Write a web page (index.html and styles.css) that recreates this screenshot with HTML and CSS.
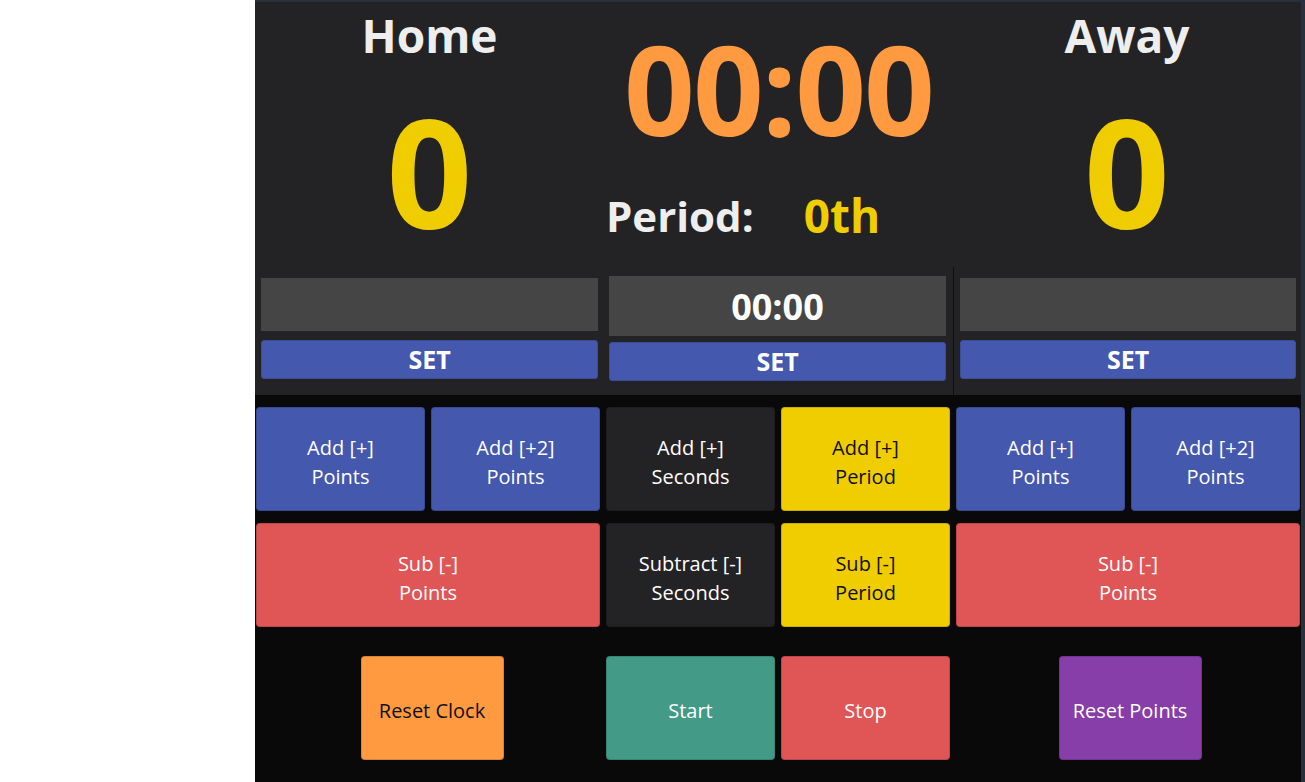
FILE: index.html
```html
<!DOCTYPE html>
<html lang="en">
<head>
    <meta charset="UTF-8">
    <meta name="viewport" content="width=device-width, initial-scale=1.0">
    <title>Scoreboard</title>
    <link rel="stylesheet" href="styles.css">
</head>
<body>
    <div class="board">
        <div class="top">
            <div class="col">
                <div class="display">
                    <h1 class="team-name">Home</h1>
                    <div class="score">0</div>
                </div>
                <div class="controls">
                    <input type="text" class="set-input" id="homeInput">
                    <button class="set-btn">SET</button>
                </div>
            </div>

            <div class="col">
                <div class="display">
                    <div class="clock">00:00</div>
                    <div class="period">
                        <span class="period-label">Period:</span>
                        <span class="period-value">0th</span>
                    </div>
                </div>
                <div class="controls center">
                    <input type="text" class="set-input time-input" id="timeInput" value="00:00">
                    <button class="set-btn">SET</button>
                </div>
            </div>

            <div class="col">
                <div class="display">
                    <h1 class="team-name">Away</h1>
                    <div class="score">0</div>
                </div>
                <div class="controls divider">
                    <input type="text" class="set-input" id="awayInput">
                    <button class="set-btn">SET</button>
                </div>
            </div>
        </div>

        <div class="buttons">
            <button class="btn blue">Add [+]<br>Points</button>
            <button class="btn blue">Add [+2]<br>Points</button>
            <button class="btn dark">Add [+]<br>Seconds</button>
            <button class="btn yellow">Add [+]<br>Period</button>
            <button class="btn blue">Add [+]<br>Points</button>
            <button class="btn blue">Add [+2]<br>Points</button>

            <button class="btn red wide">Sub [-]<br>Points</button>
            <button class="btn dark">Subtract [-]<br>Seconds</button>
            <button class="btn yellow">Sub [-]<br>Period</button>
            <button class="btn red wide">Sub [-]<br>Points</button>

            <button class="btn orange wide-small last-row reset-clock">Reset Clock</button>
            <button class="btn teal last-row">Start</button>
            <button class="btn red last-row">Stop</button>
            <button class="btn purple wide-small last-row reset-points">Reset Points</button>
        </div>
    </div>
</body>
</html>
```

FILE: styles.css
```css
body {
    margin: 0;
    background-color: #ffffff;
    font-family: "Open Sans", "Noto Sans", sans-serif;
}

.board {
    margin-left: 255px;
    width: 1050px;
    height: 782px;
    box-sizing: border-box;
    border-top: 2px solid #28313b;
    border-right: 4px solid #28313b;
    background-color: #090909;
    overflow: hidden;
}

.top {
    display: grid;
    grid-template-columns: 349px 349px 348px;
    background-color: #232325;
    height: 393px;
}

.col {
    display: flex;
    flex-direction: column;
}

.display {
    height: 265px;
    display: flex;
    flex-direction: column;
    align-items: center;
}

.team-name {
    margin: 2px 0 0 0;
    font-size: 46px;
    font-weight: 700;
    color: #eeeeee;
    line-height: normal;
}

.score {
    margin-top: 3px;
    font-size: 150px;
    font-weight: 700;
    color: #f0cd00;
    line-height: normal;
}

.clock {
    margin-top: 1px;
    font-size: 124px;
    font-weight: 700;
    color: #ff9a41;
    line-height: normal;
    letter-spacing: -2px;
}

.period {
    align-self: flex-start;
    margin: 15px 0 0 2px;
    display: flex;
    gap: 50px;
    font-size: 42px;
    font-weight: 700;
    line-height: normal;
}

.period-label {
    color: #eeeeee;
}

.period-value {
    color: #f0cd00;
    font-size: 46px;
    margin-top: -3px;
}

.controls {
    flex: 1;
    display: flex;
    flex-direction: column;
    padding: 11px 6px 0 6px;
}

.controls.center {
    padding: 9px 7px 0 5px;
}

.controls.divider {
    border-left: 1px solid #0e0e0e;
    padding: 11px 5px 0 6px;
}

.set-input {
    height: 53px;
    border: none;
    background-color: #454545;
    color: #ffffff;
    font-family: inherit;
    font-size: 36px;
    font-weight: 700;
    text-align: center;
    padding: 0;
    margin: 0 0 9px 0;
}

.time-input {
    height: 60px;
    margin-bottom: 6px;
}

.set-btn {
    height: 39px;
    border: 1px solid #3a4c9a;
    border-radius: 3px;
    background-color: #4458ad;
    color: #ffffff;
    font-family: inherit;
    font-size: 25px;
    font-weight: 700;
    line-height: 1;
    padding: 0;
    cursor: pointer;
}

.buttons {
    display: grid;
    grid-template-columns: repeat(6, 1fr);
    grid-template-rows: 104px 104px 121px;
    column-gap: 6px;
    row-gap: 12px;
    padding: 12px 1px 0 1px;
}

.btn {
    border: 1px solid rgba(0, 0, 0, 0.15);
    border-radius: 4px;
    font-family: inherit;
    font-size: 20px;
    line-height: 29px;
    padding: 5px 0 0 0;
    color: #ffffff;
    cursor: pointer;
}

.wide {
    grid-column: span 2;
}

.wide-small {
    grid-column: span 2;
    justify-self: center;
    width: 143px;
}

.reset-clock {
    margin-left: 8px;
}

.reset-points {
    margin-left: 4px;
}

.last-row {
    margin-top: 17px;
}

.blue {
    background-color: #4458ad;
}

.dark {
    background-color: #232325;
}

.yellow {
    background-color: #f0cd00;
    color: #111111;
}

.red {
    background-color: #e05555;
}

.orange {
    background-color: #ff9a41;
    color: #111111;
}

.teal {
    background-color: #439a87;
}

.purple {
    background-color: #873ea8;
}
```
